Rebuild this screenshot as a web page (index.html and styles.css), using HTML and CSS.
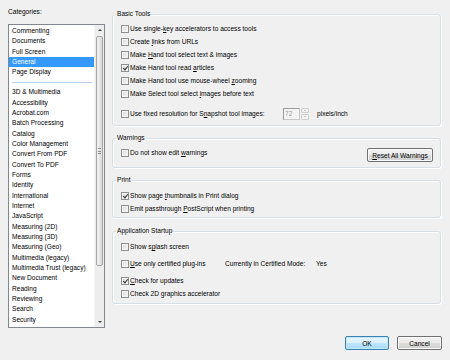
FILE: index.html
```html
<!DOCTYPE html>
<html lang="en">
<head>
  <meta charset="UTF-8">
  <title>Preferences</title>
  <link rel="stylesheet" href="styles.css">
</head>
<body>

<div class="dialog">
  <div class="main">

    <!-- Categories -->
    <div class="categories">
      <div class="cat-label">Categories:</div>
      <div class="listbox">
        <ul class="items">
          <li>Commenting</li>
          <li>Documents</li>
          <li>Full Screen</li>
          <li class="selected">General</li>
          <li>Page Display</li>
          <li class="sep"></li>
          <li>3D &amp; Multimedia</li>
          <li>Accessibility</li>
          <li>Acrobat.com</li>
          <li>Batch Processing</li>
          <li>Catalog</li>
          <li>Color Management</li>
          <li>Convert From PDF</li>
          <li>Convert To PDF</li>
          <li>Forms</li>
          <li>Identity</li>
          <li>International</li>
          <li>Internet</li>
          <li>JavaScript</li>
          <li>Measuring (2D)</li>
          <li>Measuring (3D)</li>
          <li>Measuring (Geo)</li>
          <li>Multimedia (legacy)</li>
          <li>Multimedia Trust (legacy)</li>
          <li>New Document</li>
          <li>Reading</li>
          <li>Reviewing</li>
          <li>Search</li>
          <li>Security</li>
        </ul>
        <div class="scroll">
          <div class="arrow up"></div>
          <div class="track">
            <div class="thumb"><span class="grip"></span></div>
          </div>
          <div class="arrow down"></div>
        </div>
      </div>
    </div>

    <!-- Settings -->
    <div class="settings">
      <fieldset class="group basic">
        <legend>Basic Tools</legend>
        <div class="opt"><span class="cb"></span><span>Use single-<u>k</u>ey accelerators to access tools</span></div>
        <div class="opt"><span class="cb"></span><span>Create <u>l</u>inks from URLs</span></div>
        <div class="opt"><span class="cb"></span><span>Make <u>H</u>and tool select text &amp; images</span></div>
        <div class="opt"><span class="cb on"></span><span>Make Hand tool read <u>a</u>rticles</span></div>
        <div class="opt"><span class="cb"></span><span>Make Hand tool use mouse-wheel <u>z</u>ooming</span></div>
        <div class="opt"><span class="cb"></span><span>Make Select tool select <u>i</u>mages before text</span></div>
        <div class="opt snapshot">
          <span class="cb"></span>
          <span class="snap-text">Use fixed resolution for S<u>n</u>apshot tool images:</span>
          <span class="spin-input">72</span>
          <span class="spin-btns"><span class="sb sb-up"></span><span class="sb sb-down"></span></span>
          <span class="unit">pixels/inch</span>
        </div>
      </fieldset>

      <fieldset class="group warnings">
        <legend>Warnings</legend>
        <div class="warn-row">
          <div class="opt"><span class="cb"></span><span>Do not show edit <u>w</u>arnings</span></div>
          <button class="btn reset"><u>R</u>eset All Warnings</button>
        </div>
      </fieldset>

      <fieldset class="group print">
        <legend>Print</legend>
        <div class="opt"><span class="cb on"></span><span>Show page <u>t</u>humbnails in Print dialog</span></div>
        <div class="opt"><span class="cb"></span><span>Emit passthrough <u>P</u>ostScript when printing</span></div>
      </fieldset>

      <fieldset class="group startup">
        <legend>Application Startup</legend>
        <div class="opt"><span class="cb"></span><span>Show s<u>p</u>lash screen</span></div>
        <div class="opt gap">
          <span class="cb"></span>
          <span class="cert-text"><u>U</u>se only certified plug-ins</span>
          <span class="cert-mode">Currently in Certified Mode:</span>
          <span>Yes</span>
        </div>
        <div class="opt gap"><span class="cb on"></span><span><u>C</u>heck for updates</span></div>
        <div class="opt"><span class="cb"></span><span>Check 2D graphics accelerator</span></div>
      </fieldset>
    </div>
  </div>

  <div class="footer">
    <button class="btn default">OK</button>
    <button class="btn">Cancel</button>
  </div>
</div>

</body>
</html>
```

FILE: styles.css
```css
body { margin: 0; background: #f0f0f0; font-family: "Liberation Sans", Arial, sans-serif; font-size: 6.6px; color: #000; }
u { text-decoration: underline; text-underline-offset: 1px; }

.dialog { width: 450px; height: 360px; display: flex; flex-direction: column; }
.main { display: flex; gap: 7px; padding: 7px 8px 0 8px; }

/* Categories list */
.categories { width: 97px; flex: none; }
.cat-label { line-height: 10px; margin-bottom: 7px; }
.listbox { display: flex; height: 304px; box-sizing: border-box; border: 1px solid #828790; background: #fff; }
.items { flex: 1; list-style: none; margin: 0; padding: 1px 0 0 0; overflow: hidden; }
.items li { height: 10.33px; line-height: 10.33px; padding-left: 3px; white-space: nowrap; }
.items li.selected { background: #3399ff; color: #fff; }
.items li.sep { height: 9.67px; position: relative; }
.items li.sep::after { content: ""; position: absolute; left: 3px; right: 2px; top: 4px; height: 1px; background: #b9d1ea; }

.scroll { width: 9px; flex: none; display: flex; flex-direction: column; background: #ededed; border-left: 1px solid #f4f4f4; }
.arrow { height: 10px; flex: none; display: flex; align-items: center; justify-content: center; }
.arrow::after { content: ""; border-left: 2px solid transparent; border-right: 2px solid transparent; }
.arrow.up::after { border-bottom: 2px solid #404040; }
.arrow.down::after { border-top: 2px solid #404040; }
.track { flex: 1; padding: 1px 1px 0 1px; }
.thumb { height: 230px; box-sizing: border-box; border: 1px solid #a6a6a6; border-radius: 2px; background: linear-gradient(to right, #f3f3f3, #dadada); display: flex; align-items: center; justify-content: center; }
.grip { width: 3px; height: 4px; border-top: 1px solid #8a8a8a; border-bottom: 1px solid #8a8a8a; background: linear-gradient(#8a8a8a, #8a8a8a) center / 100% 1px no-repeat; }

/* Settings groups */
.settings { width: 329px; padding-top: 2px; }
.group { margin: 0; padding: 0; border: 1px solid #d5dfe5; border-radius: 3px; box-shadow: inset 1px 1px 0 #fff, 1px 1px 0 #fff; min-width: 0; }
.group legend { margin-left: 3px; padding: 0 1px; line-height: 10px; }
.group + .group { margin-top: 7px; }
.basic { padding: 3px 0 5px; }
.warnings { padding: 3px 7px 5px 0; }
.print { padding: 4px 0 2px; }
.startup { margin-top: 8px !important; padding: 4px 0 3px; }

.opt { display: flex; align-items: center; height: 13px; padding-left: 8px; white-space: nowrap; }
.opt.gap { margin-top: 4px; }
.snapshot { margin-top: 7px; }
.cb { width: 8px; height: 8px; box-sizing: border-box; flex: none; margin-right: 1px; border: 1px solid #8e8f8f; background: linear-gradient(135deg, #d6d6d6, #fbfbfb); box-shadow: inset 0 0 0 1px #f4f4f4; position: relative; }
.cb.on::after { content: ""; position: absolute; left: 2px; top: 0; width: 2px; height: 4px; border-right: 1px solid #2a2a2a; border-bottom: 1px solid #2a2a2a; transform: rotate(40deg); }

.snap-text { width: 153px; }
.spin-input { width: 17px; height: 12px; box-sizing: border-box; border: 1px solid #c8c8c8; border-top-color: #9a9a9a; border-left-color: #9a9a9a; background: #f4f4f4; color: #9b9b9b; line-height: 10px; padding-left: 1px; }
.spin-btns { width: 8px; height: 12px; margin-left: 1px; display: flex; flex-direction: column; gap: 1px; }
.sb { flex: 1; border: 1px solid #cfcfcf; border-radius: 1px; background: #f2f2f2; display: flex; align-items: center; justify-content: center; }
.sb::after { content: ""; border-left: 1.5px solid transparent; border-right: 1.5px solid transparent; }
.sb-up::after { border-bottom: 1.5px solid #a0a0a0; }
.sb-down::after { border-top: 1.5px solid #a0a0a0; }
.unit { margin-left: 8px; }

.warn-row { display: flex; justify-content: space-between; align-items: flex-start; }
.cert-text { width: 95px; }
.cert-mode { width: 91px; }

/* Buttons */
.btn { font: inherit; color: #000; height: 14px; padding: 0; box-sizing: border-box; border: 1px solid #707070; border-radius: 2px; background: linear-gradient(#f2f2f2 0%, #ebebeb 50%, #dddddd 51%, #cfcfcf 100%); box-shadow: inset 0 0 0 1px #fcfcfc; }
.reset { width: 66px; margin-top: 2px; }
.footer { margin-top: auto; display: flex; justify-content: flex-end; gap: 8px; padding: 0 8px 10px; }
.footer .btn { width: 44px; }
.footer .btn + .btn { width: 45px; }
.btn.default { border-color: #3c7fb1; background: linear-gradient(#eaf6fd 0%, #d9f0fc 50%, #bee6fd 51%, #a7d9f5 100%); box-shadow: inset 0 0 0 1px #c0e8fb; }
```
